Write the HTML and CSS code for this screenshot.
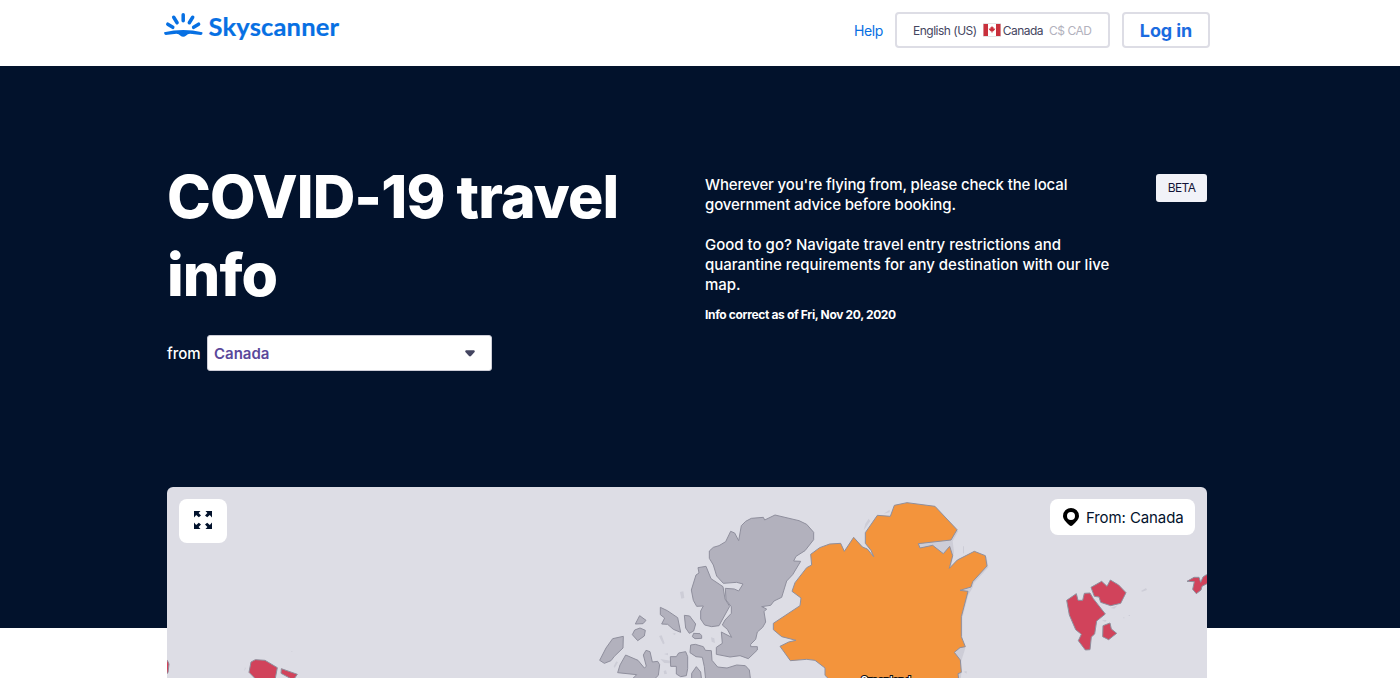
FILE: index.html
```html
<!DOCTYPE html>
<html lang="en-US">
<head>
  <meta charset="UTF-8">
  <title>COVID-19 travel info | Skyscanner</title>
  <meta name="viewport" content="width=device-width, initial-scale=1.0">
  <link rel="stylesheet" href="styles.css">
</head>
<body>
  <header class="header">
    <a class="logo" href="#">
      <svg width="180" height="34" viewBox="0 0 180 34">
        <g stroke="#0770e3" stroke-width="3.5" stroke-linecap="round">
          <path d="M19.2 2.700v6.100M9.700 5.300l3.400 5.400M28.700 5.300l-3.400 5.400M3.800 12.200l5 3.100M34.600 12.200l-5 3.100"/>
        </g>
        <path fill="#0770e3" d="M.2 20.200Q19.200 15.800 38.300 20.200Q39 22.500 36.800 23L26 21.800Q23.500 22 22.200 23.600Q19.200 26 16.200 23.600Q14.900 22 12.500 21.800L1.700 23Q-.2 22.500 .2 20.200Z"/>
        <text class="logo-text" x="44.500" y="23.800" textLength="130.500">Skyscanner</text>
      </svg>
    </a>
    <nav class="nav">
      <a class="help" href="#">Help</a>
      <button class="culture">
        <span>English (US)</span>
        <svg class="flag" width="18" height="14" viewBox="0 0 18 14">
          <path fill="#e3e3e6" d="M0 0h18v14H0z"/>
          <path fill="#fff" d="M1 1h16v12H1z"/>
          <path fill="#c9303c" d="M.5 1H5v12H.5zM13 1h4.500v12H13zM9 3l1 1.500 .8-.3-.2 1.500 1.700-.2-.5 1.200-1.800 1.700-.7.100V10h-.6V8.500l-.7-.1-1.800-1.700-.5-1.200 1.700.2-.2-1.500.8.300z"/>
        </svg>
        <span>Canada</span>
        <span class="currency">C$ CAD</span>
      </button>
      <button class="login">Log in</button>
    </nav>
  </header>

  <section class="hero">
    <div class="hero-left">
      <h1>COVID-19 travel info</h1>
      <div class="from">
        <label>from</label>
        <div class="select">
          <span>Canada</span>
          <svg width="10" height="7" viewBox="0 0 10 7"><path fill="#444560" d="M1 .3h8q1.200.5.600 1.600L6 6Q5 6.800 4 6L.4 1.900Q-.2.800 1 .3z"/></svg>
        </div>
      </div>
    </div>
    <div class="hero-text">
      <p>Wherever you're flying from, please check the local government advice before booking.</p>
      <p>Good to go? Navigate travel entry restrictions and quarantine requirements for any destination with our live map.</p>
      <small>Info correct as of Fri, Nov 20, 2020</small>
    </div>
    <span class="beta">BETA</span>
  </section>

  <main class="map">
    <svg class="map-canvas" width="1040" height="191" viewBox="0 0 3120 573">
      <!-- small islets -->
      <g class="islets">
        <path d="M1539 315l10-2 3 20-9 2zM1476 447l8-2 9 24-5 3zM1516 440l10-2-2 6zM1491 501l12-3v7zM1480 516l30 5 0 8-18-1zM1490 552l7-2 3 10-8 2zM1340 538l8-15 5 3-10 17zM1632 451l10 3 2 14-10-4z"/>
        <path d="M2095 110l10-15 5 7-20 28zM2150 80l18-12v8zM2388 178l3 0v20l-3 2zM2922 312l15-9 3 6-14 5zM2805 400l14-1-4 6zM2830 363l22-8-10 10zM2390 554l9-2v8z"/>
        <path d="M2869 391h3v3h-3zM2885 384h4v3h-4zM373 493h3v2h-3zM234 540l2 5-4 8z"/>
      </g>

      <!-- Canadian arctic -->
      <g class="grey" transform="translate(1569 39)">
        <path d="M58 153L70 142 87 137 107 125 122 94 134 99 146 122 154 77 167 64 184 55 220 52 224 60 255 45 327 62 350 73 371 97V119L345 152 318 169 311 183 332 184 308 224 290 243 275 292 252 303 242 316 215 320 230 327 222 335 227 366 218 382 202 396 197 418 182 433V440H202V450L175 476 150 467 120 471 79 463V442L97 430 94 396 125 412 112 388 97 375 105 360 124 340V320L108 300 106 265 133 267 146 273 159 252 140 247 100 250 80 228 70 195 58 175z"/>
        <path d="M24 203L48 199 63 236 99 260 105 297 119 319 87 377 65 380 44 375 32 357V333L40 318 20 319 10 301 4 270 18 225 27 219z"/>
      </g>
      <g class="grey" transform="translate(1269 9)">
        <path d="M149 377L168 391 159 401 136 402zM134 420L150 414 166 421 163 438 143 452 127 434zM211 352L232 362 263 383 272 427 250 418 233 403 215 402 224 384 211 374zM283 376L299 378 317 402 311 423 298 430 287 414zM311 430L330 431 335 437V445L315 446 307 440z"/>
        <path d="M68 446L100 439 99 474 73 499 63 512 43 520 29 511 48 474zM107 495L144 511 163 534 169 529 160 495 168 481 180 485 187 516 203 514 209 524 205 556 180 580H150L130 564 140 554 83 548 90 525zM241 500L259 500 266 489 287 485 293 500V536L289 557 272 560 259 552V529L242 529zM319 530L332 546 336 580H305V550zM302 465L316 463 340 470 346 481 364 482 366 511 383 531 411 534 440 525 466 527 478 540 483 580H348L343 530 337 502 318 500 300 488z"/>
      </g>

      <!-- Greenland -->
      <g class="coast" transform="translate(1783 13)">
        <path d="M253 184L281 142 310 170 341 200 316 160V128L352 76 391 79 403 46 441 38 525 49 591 119 574 150 578 181 568 235 592 210 643 184 676 197 681 228 638 275 633 291 621 310 603 380V440L612 470 600 509V548L596 580H320z"/>
      </g>
      <g class="orange" transform="translate(1779 9)">
        <path d="M152 193L179 173 209 162 242 160 253 184 281 142 307 171 322 177 341 200 333 181 316 160V128L352 76 391 79 403 46 441 38 525 49 591 119 573 150 475 161 480 174 518 166 550 191 569 169 578 197 568 235 592 210 643 184 676 197 681 228 638 275 633 291 600 301 624 304 604 380V440L616 470 600 473 583 487 601 510 604 547 594 551 599 590H230L195 556V534L165 511 140 508 91 512 60 469 86 456 108 451 65 440 40 419V400L120 347 123 324 96 304 105 278 140 233 155 225z"/>
        <text class="place" x="302" y="581" textLength="150">Greenland</text>
      </g>

      <!-- Svalbard and the eastern islands -->
      <g class="red" transform="translate(2589 -21)">
        <path d="M110 361L139 341 144 361H158L163 340 180 339 190 356 226 402 200 423 194 462 184 471 180 509 166 510 145 482 154 463 137 449 118 405zM183 322L215 304 231 319 241 300 266 315 288 338 272 370 242 377 212 367 207 351 193 349zM219 437L240 429 244 447 260 460 236 479 218 470zM471 304L492 292H507L512 307 519 291 529 284 540 294V306L516 319 513 330 499 341 488 328 493 305z"/>
      </g>

      <!-- Alaska side -->
      <g class="red" transform="translate(-21 -21)">
        <path d="M10 535L22 541 27 552 24 578 10 590zM273 546L286 539 315 541 352 563 345 600H290L267 577zM364 566L412 583 400 600 363 580z"/>
      </g>
    </svg>
    <div class="map-controls">
      <button class="expand">
        <svg width="18" height="18" viewBox="0 0 18 18">
          <path fill="#02122c" d="M0 0h6.500L4.600 1.900 7 4.500 4.800 6.300 2.200 4 0 6.500zM18 0h-6.500l1.900 1.900L11 4.500l2.200 1.800L15.800 4 18 6.500zM0 18h6.500l-1.900-1.900L7 13.500l-2.200-1.800L2.200 14 0 11.500zM18 18h-6.500l1.900-1.900L11 13.500l2.200-1.800 2.600 2.300 2.200-2.500z"/>
        </svg>
      </button>
      <div class="origin">
        <svg width="16" height="18" viewBox="0 0 16 18"><path fill-rule="evenodd" d="M8 0a8 8 0 0 1 8 8c0 3-2.600 5.700-6.400 9.300q-1.600 1.400-3.200 0C2.600 13.700 0 11 0 8a8 8 0 0 1 8-8zm0 4a4 4 0 1 0 0 8 4 4 0 0 0 0-8z"/></svg>
        <span>From: Canada</span>
      </div>
    </div>
  </main>
</body>
</html>
```

FILE: styles.css
```css
* { box-sizing: border-box; }
body {
  margin: 0;
  height: 678px;
  overflow: hidden;
  background: #fff;
  font-family: Inter, "Liberation Sans", sans-serif;
  color: #02122c;
}
button {
  font-family: inherit;
  background: #fff;
  padding: 0;
  cursor: pointer;
}
.header {
  display: flex;
  justify-content: space-between;
  width: 1046px;
  height: 66px;
  margin-left: 164px;
  padding-top: 12px;
}
.logo svg { display: block; fill: none; }
.logo-text {
  font-family: Lato, sans-serif;
  font-size: 25.5px;
  font-weight: 700;
  fill: #0770e3;
  stroke: #0770e3;
  stroke-width: 0.2;
}
.nav {
  display: flex;
  align-items: center;
  height: 36px;
}
.help {
  margin-right: 12px;
  font-size: 14px;
  letter-spacing: -0.4px;
  color: #0770e3;
  text-decoration: none;
}
.culture {
  display: flex;
  align-items: center;
  width: 215px;
  height: 36px;
  margin-right: 12px;
  padding-left: 16px;
  border: 2px solid #dddde5;
  border-radius: 4px;
  font-size: 12px;
  letter-spacing: -0.5px;
  color: #444560;
}
.flag { margin: 0 2px 1px 6px; }
.currency {
  margin-left: 6px;
  color: #b2b1bd;
}
.login {
  width: 88px;
  height: 36px;
  border: 2px solid #dddde5;
  border-radius: 4px;
  font-size: 18px;
  font-weight: 700;
  letter-spacing: -0.1px;
  color: #1a6be0;
}
.hero {
  display: flex;
  align-items: flex-start;
  height: 562px;
  padding: 92px 193px 0 167px;
  background: #02122c;
  color: #fff;
}
.hero-left { width: 538px; }
h1 {
  width: 480px;
  margin: 0;
  font-size: 59px;
  line-height: 78px;
  font-weight: 800;
  letter-spacing: -0.9px;
}
.from {
  display: flex;
  align-items: center;
  gap: 6px;
  margin-top: 21px;
  font-size: 15px;
  font-weight: 500;
}
.from label { width: 34px; }
.select {
  display: flex;
  align-items: center;
  justify-content: space-between;
  width: 285px;
  height: 36px;
  padding: 0 16px 0 6px;
  border: 1px solid #cdcdd7;
  border-radius: 3px;
  background: #fff;
  font-weight: 600;
  color: #5a489b;
}
.hero-text {
  width: 420px;
  padding-top: 17px;
  font-size: 15px;
  line-height: 20px;
  font-weight: 500;
}
.hero-text p { margin: 0 0 20px; }
.hero-text p:first-child { letter-spacing: -0.14px; }
.hero-text p + p { margin-bottom: 10px; }
.hero-text small {
  display: block;
  font-size: 12px;
  font-weight: 700;
  letter-spacing: -0.35px;
}
.beta {
  width: 51px;
  margin: 16px 0 0 auto;
  border-radius: 3px;
  background: #f1f2f8;
  font-size: 12px;
  line-height: 28px;
  text-align: center;
  letter-spacing: -0.6px;
  color: #111236;
}
.map {
  position: relative;
  width: 1040px;
  height: 191px;
  margin: -141px 0 0 167px;
  border-radius: 6px 6px 0 0;
  background: #dddde5;
  overflow: hidden;
}
.map-canvas { display: block; }
.map-canvas path { stroke-linejoin: round; }
.islets { fill: #cdcdd7; }
.coast { fill: #cdcdd7; }
.grey, .orange, .red {
  stroke: #8f8f9d;
  stroke-width: 3;
}
.grey { fill: #b2b1bd; }
.orange { fill: #f3943c; }
.red { fill: #d1435b; }
.place {
  font-size: 29px;
  font-weight: 600;
  fill: #fff;
  stroke: #111;
  stroke-width: 6;
  paint-order: stroke;
}
.map-controls {
  position: absolute;
  inset: 12px 12px auto;
  display: flex;
  justify-content: space-between;
  align-items: flex-start;
}
.expand {
  display: grid;
  place-items: center;
  width: 48px;
  height: 44px;
  padding-bottom: 2px;
  border: 0;
  border-radius: 8px;
}
.origin {
  display: flex;
  align-items: center;
  gap: 7px;
  width: 145px;
  height: 36px;
  padding-left: 13px;
  border-radius: 8px;
  background: #fff;
  font-size: 15px;
  letter-spacing: -0.1px;
  white-space: nowrap;
}
```
